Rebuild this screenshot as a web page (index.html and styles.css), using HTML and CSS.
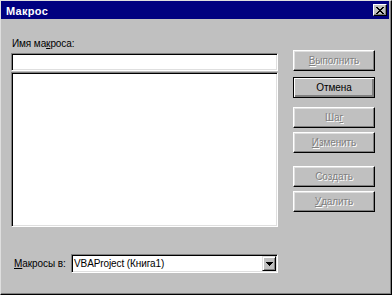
FILE: index.html
```html
<!DOCTYPE html>
<html lang="ru">
<head>
<meta charset="utf-8">
<title>Макрос</title>
<link rel="stylesheet" href="styles.css">
</head>
<body>
<div class="window">
  <div class="titlebar">
    <span class="title">Макрос</span>
    <span class="close">
      <svg width="8" height="7" viewBox="0 0 8 7"><path d="M0 0h2v1h1v1h2v-1h1v-1h2v1h-1v1h-1v1h-1v1h1v1h1v1h1v1h-2v-1h-1v-1h-2v1h-1v1h-2v-1h1v-1h1v-1h1v-1h-1v-1h-1v-1h-1z" fill="#000"/></svg>
    </span>
  </div>
  <div class="main">
    <div class="left">
      <div class="label">Имя ма<u>к</u>роса:</div>
      <div class="field"></div>
      <div class="list"></div>
    </div>
    <div class="buttons">
      <div class="btn disabled b1"><u>В</u>ыполнить</div>
      <div class="btn default b2">Отмена</div>
      <div class="btn disabled b3">Ша<u>г</u></div>
      <div class="btn disabled b4"><u>И</u>зменить</div>
      <div class="btn disabled b5">Соз<u>д</u>ать</div>
      <div class="btn disabled b6"><u>У</u>далить</div>
    </div>
  </div>
  <div class="bottom">
    <div class="label2"><u>М</u>акросы в:</div>
    <div class="combo">
      <span class="combo-text">VBAProject (Книга1)</span>
      <span class="drop">
        <svg width="7" height="4" viewBox="0 0 7 4"><path d="M0 0h7v1h-1v1h-1v1h-1v1h-1v-1h-1v-1h-1v-1h-1z" fill="#000"/></svg>
      </span>
    </div>
  </div>
</div>
</body>
</html>
```

FILE: styles.css
```css
* { box-sizing: border-box; }
html, body { margin: 0; padding: 0; }
body {
  width: 392px;
  height: 295px;
  background: #c0c0c0;
  font-family: "Liberation Sans", Arial, sans-serif;
  font-size: 10px;
  letter-spacing: -0.1px;
  color: #000;
  overflow: hidden;
}
.window {
  width: 392px;
  height: 295px;
  background: #c0c0c0;
  border-top: 1px solid #dfdfdf;
  border-left: 1px solid #dfdfdf;
  border-right: 1px solid #000;
  border-bottom: 1px solid #000;
  box-shadow: inset -1px -1px 0 #808080;
  display: flex;
  flex-direction: column;
}
.titlebar {
  height: 18px;
  width: 388px;
  background: #000080;
  display: flex;
  align-items: center;
  justify-content: space-between;
  padding-left: 5px;
  padding-right: 2px;
}
.title {
  color: #fff;
  font-weight: bold;
  font-size: 11px;
  letter-spacing: 0.3px;
  padding-top: 1px;
}
.close {
  width: 14px;
  height: 12px;
  background: #c0c0c0;
  border-top: 1px solid #fff;
  border-left: 1px solid #fff;
  border-right: 1px solid #000;
  border-bottom: 1px solid #000;
  box-shadow: inset -1px -1px 0 #808080;
  display: flex;
  align-items: center;
  justify-content: center;
  padding-right: 1px;
}
.close svg { display: block; }
.main {
  display: flex;
  padding-left: 10px;
}
.left {
  display: flex;
  flex-direction: column;
  width: 267px;
}
.label {
  margin-top: 18px;
  height: 13px;
  line-height: 13px;
  padding-left: 1px;
}
.field, .list, .combo {
  background: #fff;
  border-top: 1px solid #808080;
  border-left: 1px solid #808080;
  border-right: 1px solid #fff;
  border-bottom: 1px solid #fff;
  box-shadow: inset 1px 1px 0 #000, inset -1px -1px 0 #dfdfdf;
}
.field {
  margin-top: 3px;
  height: 18px;
}
.list {
  margin-top: 1px;
  height: 155px;
}
.buttons {
  display: flex;
  flex-direction: column;
  margin-left: 15px;
  margin-top: 31px;
  width: 82px;
}
.btn {
  height: 21px;
  background: #c0c0c0;
  border-top: 1px solid #fff;
  border-left: 1px solid #fff;
  border-right: 1px solid #000;
  border-bottom: 1px solid #000;
  box-shadow: inset -1px -1px 0 #808080, inset 1px 1px 0 #dfdfdf;
  display: flex;
  align-items: center;
  justify-content: center;
  line-height: 13px;
}
.btn.disabled {
  color: #808080;
  text-shadow: 1px 1px 0 #fff;
}
.btn.default {
  border: 1px solid #000;
  box-shadow: inset 1px 1px 0 #fff, inset -1px -1px 0 #808080, inset -2px -2px 0 #808080;
}
.b2 { margin-top: 6px; }
.b3 { margin-top: 9px; }
.b4 { margin-top: 4px; }
.b5 { margin-top: 13px; }
.b6 { margin-top: 4px; }
.bottom {
  display: flex;
  align-items: center;
  padding-left: 13px;
  margin-top: 27px;
}
.label2 {
  width: 57px;
  line-height: 13px;
  white-space: nowrap;
}
.combo {
  width: 207px;
  height: 19px;
  display: flex;
  align-items: center;
  justify-content: space-between;
  padding: 0 1px 0 2px;
}
.combo-text { line-height: 13px; white-space: nowrap; }
.drop {
  width: 14px;
  height: 15px;
  background: #c0c0c0;
  border-top: 1px solid #dfdfdf;
  border-left: 1px solid #dfdfdf;
  border-right: 1px solid #000;
  border-bottom: 1px solid #000;
  box-shadow: inset 1px 1px 0 #fff, inset -1px -1px 0 #808080;
  display: flex;
  align-items: center;
  justify-content: center;
}
.drop svg { display: block; }
u { text-decoration: underline; text-underline-offset: 1px; }
```
